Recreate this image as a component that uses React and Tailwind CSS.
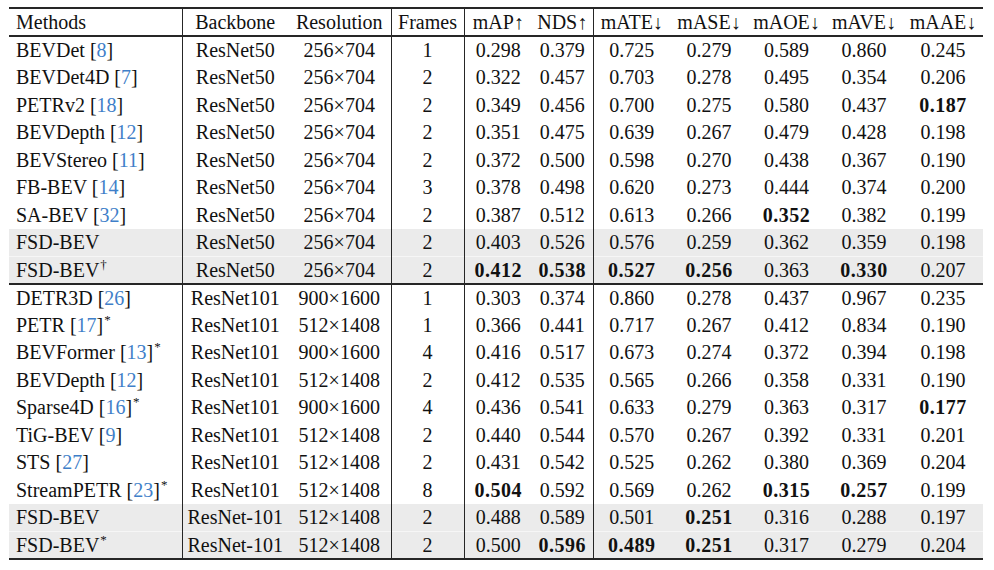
import clsx from "clsx";

const groupA = [
  { name: "BEVDet", ref: 8, bb: "ResNet50", res: "256×704", fr: 1, v: ["0.298", "0.379", "0.725", "0.279", "0.589", "0.860", "0.245"] },
  { name: "BEVDet4D", ref: 7, bb: "ResNet50", res: "256×704", fr: 2, v: ["0.322", "0.457", "0.703", "0.278", "0.495", "0.354", "0.206"] },
  { name: "PETRv2", ref: 18, bb: "ResNet50", res: "256×704", fr: 2, v: ["0.349", "0.456", "0.700", "0.275", "0.580", "0.437", "0.187"], bold: [6] },
  { name: "BEVDepth", ref: 12, bb: "ResNet50", res: "256×704", fr: 2, v: ["0.351", "0.475", "0.639", "0.267", "0.479", "0.428", "0.198"] },
  { name: "BEVStereo", ref: 11, bb: "ResNet50", res: "256×704", fr: 2, v: ["0.372", "0.500", "0.598", "0.270", "0.438", "0.367", "0.190"] },
  { name: "FB-BEV", ref: 14, bb: "ResNet50", res: "256×704", fr: 3, v: ["0.378", "0.498", "0.620", "0.273", "0.444", "0.374", "0.200"] },
  { name: "SA-BEV", ref: 32, bb: "ResNet50", res: "256×704", fr: 2, v: ["0.387", "0.512", "0.613", "0.266", "0.352", "0.382", "0.199"], bold: [4] },
  { name: "FSD-BEV", bb: "ResNet50", res: "256×704", fr: 2, v: ["0.403", "0.526", "0.576", "0.259", "0.362", "0.359", "0.198"], ours: true },
  { name: "FSD-BEV", sup: "†", bb: "ResNet50", res: "256×704", fr: 2, v: ["0.412", "0.538", "0.527", "0.256", "0.363", "0.330", "0.207"], bold: [0, 1, 2, 3, 5], ours: true },
];

const groupB = [
  { name: "DETR3D", ref: 26, bb: "ResNet101", res: "900×1600", fr: 1, v: ["0.303", "0.374", "0.860", "0.278", "0.437", "0.967", "0.235"] },
  { name: "PETR", ref: 17, sup: "*", bb: "ResNet101", res: "512×1408", fr: 1, v: ["0.366", "0.441", "0.717", "0.267", "0.412", "0.834", "0.190"] },
  { name: "BEVFormer", ref: 13, sup: "*", bb: "ResNet101", res: "900×1600", fr: 4, v: ["0.416", "0.517", "0.673", "0.274", "0.372", "0.394", "0.198"] },
  { name: "BEVDepth", ref: 12, bb: "ResNet101", res: "512×1408", fr: 2, v: ["0.412", "0.535", "0.565", "0.266", "0.358", "0.331", "0.190"] },
  { name: "Sparse4D", ref: 16, sup: "*", bb: "ResNet101", res: "900×1600", fr: 4, v: ["0.436", "0.541", "0.633", "0.279", "0.363", "0.317", "0.177"], bold: [6] },
  { name: "TiG-BEV", ref: 9, bb: "ResNet101", res: "512×1408", fr: 2, v: ["0.440", "0.544", "0.570", "0.267", "0.392", "0.331", "0.201"] },
  { name: "STS", ref: 27, bb: "ResNet101", res: "512×1408", fr: 2, v: ["0.431", "0.542", "0.525", "0.262", "0.380", "0.369", "0.204"] },
  { name: "StreamPETR", ref: 23, sup: "*", bb: "ResNet101", res: "512×1408", fr: 8, v: ["0.504", "0.592", "0.569", "0.262", "0.315", "0.257", "0.199"], bold: [0, 4, 5] },
  { name: "FSD-BEV", bb: "ResNet-101", res: "512×1408", fr: 2, v: ["0.488", "0.589", "0.501", "0.251", "0.316", "0.288", "0.197"], bold: [3], ours: true },
  { name: "FSD-BEV", sup: "*", bb: "ResNet-101", res: "512×1408", fr: 2, v: ["0.500", "0.596", "0.489", "0.251", "0.317", "0.279", "0.204"], bold: [1, 2, 3], ours: true },
];

const headers = ["mAP↑", "NDS↑", "mATE↓", "mASE↓", "mAOE↓", "mAVE↓", "mAAE↓"];
const widths = ["w-[68px]", "w-[61px]", "w-[77px]", "w-[78px]", "w-[77px]", "w-[78px]", "w-[80px]"];

const Row = ({ r, last, first }) => (
  <tr
    className={clsx(
      "h-[27.5px]",
      r.ours && "bg-[#ebebeb]",
      r.ours && !last && "border-b border-[#f6f6f6]",
      first && "border-t-2 border-[#262626]"
    )}
  >
    <td className="pl-[7px] text-left whitespace-nowrap border-r border-[#262626]">
      {r.name}
      {r.ref && (
        <>
          {" "}[<span className="text-[#3f7fc9]">{r.ref}</span>]
        </>
      )}
      {r.sup && <sup className="text-[13px] ml-[1px] -top-[8px]">{r.sup}</sup>}
    </td>
    <td className="text-center">{r.bb}</td>
    <td className="text-center border-r border-[#262626]">{r.res}</td>
    <td className="text-center border-r border-[#262626]">{r.fr}</td>
    {r.v.map((x, i) => (
      <td
        key={i}
        className={clsx(
          "text-center",
          i === 1 && "border-r border-[#262626]",
          r.bold && r.bold.includes(i) && "font-bold tracking-[0.5px]"
        )}
      >
        {x}
      </td>
    ))}
  </tr>
);

export default function App() {
  return (
    <div className="w-[994px] h-[570px] bg-white pt-[7px] pl-[9px] text-[20px] leading-none text-[#111] font-['Liberation_Serif',serif]">
      <table className="table-fixed border-collapse w-[974px] border-t-2 border-b-2 border-[#262626]">
        <colgroup>
          <col className="w-[173px]" />
          <col className="w-[106px]" />
          <col className="w-[103px]" />
          <col className="w-[73px]" />
          {widths.map((w, i) => (
            <col key={i} className={w} />
          ))}
        </colgroup>
        <thead>
          <tr className="h-[28px] border-b-2 border-[#262626]">
            <th className="pl-[7px] text-left font-normal border-r border-[#262626]">Methods</th>
            <th className="font-normal">Backbone</th>
            <th className="font-normal border-r border-[#262626]">Resolution</th>
            <th className="font-normal border-r border-[#262626]">Frames</th>
            {headers.map((h, i) => (
              <th key={h} className={clsx("font-normal whitespace-nowrap", i === 1 && "border-r border-[#262626]")}>
                {h}
              </th>
            ))}
          </tr>
        </thead>
        <tbody>
          {groupA.map((r, i) => (
            <Row key={"a" + i} r={r} last={i === groupA.length - 1} />
          ))}
          {groupB.map((r, i) => (
            <Row key={"b" + i} r={r} first={i === 0} last={i === groupB.length - 1} />
          ))}
        </tbody>
      </table>
    </div>
  );
}
